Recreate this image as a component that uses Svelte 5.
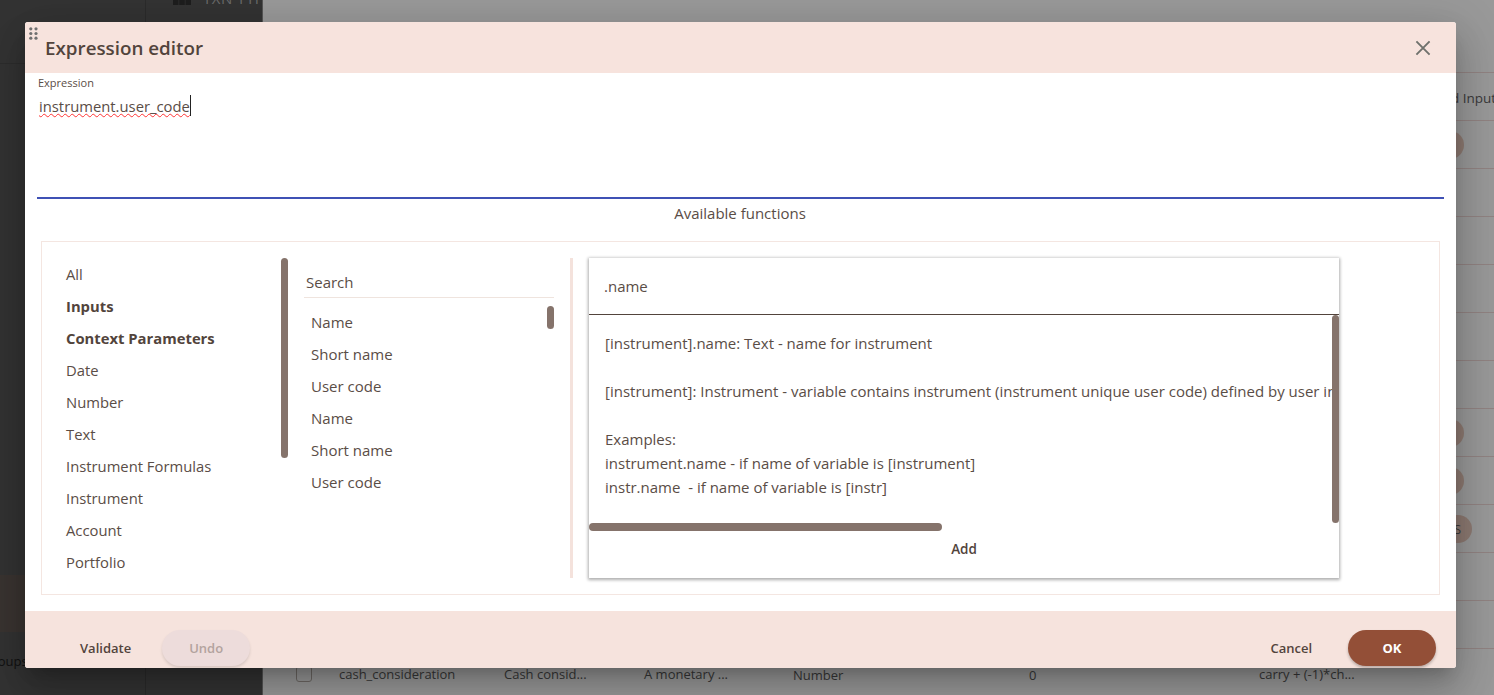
<script lang="ts">
  const categories = [
    { name: 'All' },
    { name: 'Inputs', bold: true },
    { name: 'Context Parameters', bold: true },
    { name: 'Date' },
    { name: 'Number' },
    { name: 'Text' },
    { name: 'Instrument Formulas' },
    { name: 'Instrument' },
    { name: 'Account' },
    { name: 'Portfolio' }
  ]
  const functions = ['Name', 'Short name', 'User code', 'Name', 'Short name', 'User code']
  const pills = [
    { top: 131, left: 1157, width: 44, text: '' },
    { top: 419, left: 1157, width: 44, text: '' },
    { top: 467, left: 1157, width: 44, text: '' },
    { top: 515, left: 1165, width: 44, text: 'S' }
  ]
  const rowLines = [72, 120, 168, 216, 264, 312, 360, 408, 456, 504, 552, 600, 648]
</script>

<div class="page">
  <aside class="sidebar">
    <div class="side-top">
      <svg class="grid-icon" width="18" height="5" viewBox="0 0 18 5"><rect width="5.5" height="5" /><rect x="6.25" width="5.5" height="5" /><rect x="12.5" width="5.5" height="5" /></svg>
      <span>TXN TYPE</span>
    </div>
    <div class="side-line"></div>
    <div class="side-band"></div>
    <span class="side-groups">Groups</span>
  </aside>

  <main class="backdrop">
    {#each rowLines as y}
      <div class="row-line" style="top: {y}px"></div>
    {/each}
    {#each pills as p}
      <div class="pill" style="top: {p.top}px; left: {p.left}px; width: {p.width}px">{p.text}</div>
    {/each}
    <span class="bg-text head-tail">d Input</span>
    <div class="bg-row">
      <span class="bg-check"></span>
      <span class="c1">cash_consideration</span>
      <span class="c2">Cash consid...</span>
      <span class="c3">A monetary ...</span>
      <span class="c4">Number</span>
      <span class="c5">0</span>
      <span class="c6">carry + (-1)*ch...</span>
    </div>
  </main>

  <div class="dialog">
    <header class="head">
      <svg class="drag" width="9" height="13" viewBox="0 0 9 13" fill="#6f6f6f">
        <circle cx="1.8" cy="1.8" r="1.6" /><circle cx="7" cy="1.8" r="1.6" />
        <circle cx="1.8" cy="6.5" r="1.6" /><circle cx="7" cy="6.5" r="1.6" />
        <circle cx="1.8" cy="11.2" r="1.6" /><circle cx="7" cy="11.2" r="1.6" />
      </svg>
      <h1>Expression editor</h1>
      <button class="close" type="button" aria-label="Close">
        <svg width="16" height="16" viewBox="0 0 16 16" fill="none" stroke="#6f716c" stroke-width="1.9"><path d="M1.4 1.4 14.6 14.6M14.6 1.4 1.4 14.6" /></svg>
      </button>
    </header>

    <section class="body">
      <div class="expr">
        <label for="expr-box">Expression</label>
        <div id="expr-box" class="expr-value"><span class="squiggle">instrument.user_code</span><span class="caret"></span></div>
      </div>
      <div class="avail">Available functions</div>

      <div class="panel">
        <div class="cats">
          <ul>
            {#each categories as c}
              <li class:bold={c.bold}>{c.name}</li>
            {/each}
          </ul>
          <div class="thumb v cats-thumb"></div>
        </div>

        <div class="funcs">
          <div class="search">Search</div>
          <ul>
            {#each functions as f}
              <li>{f}</li>
            {/each}
          </ul>
          <div class="thumb v funcs-thumb"></div>
        </div>

        <div class="divider"></div>

        <div class="card">
          <div class="card-title">.name</div>
          <div class="card-body">
            <p>[instrument].name: Text - name for instrument</p>
            <p>[instrument]: Instrument - variable contains instrument (instrument unique user code) defined by user in the input form of the report</p>
            <p>Examples:<br />instrument.name - if name of variable is [instrument]<br />instr.name&nbsp; - if name of variable is [instr]</p>
            <div class="thumb v card-thumb-v"></div>
            <div class="thumb card-thumb-h"></div>
          </div>
          <div class="card-foot"><button type="button" class="text-btn add">Add</button></div>
        </div>
      </div>
    </section>

    <footer class="foot">
      <button type="button" class="text-btn">Validate</button>
      <button type="button" class="undo">Undo</button>
      <span class="spacer"></span>
      <button type="button" class="text-btn">Cancel</button>
      <button type="button" class="ok">OK</button>
    </footer>
  </div>
</div>

<style>
  :global(body) {
    margin: 0;
    font-family: "Open Sans", "Noto Sans", sans-serif;
    color: #5a4d46;
  }
  ul { list-style: none; margin: 0; padding: 0; }
  button { font-family: inherit; border: none; background: none; padding: 0; cursor: pointer; }

  .page {
    position: relative;
    width: 1494px;
    height: 695px;
    overflow: hidden;
    display: flex;
    background: #999;
  }
  .sidebar {
    position: relative;
    width: 263px;
    flex-shrink: 0;
    background: #333;
    border-right: 1px solid #555;
    box-sizing: border-box;
    color: #1c1c1c;
  }
  .side-top {
    display: flex;
    gap: 12px;
    padding: 0 0 0 173px;
    height: 5px;
    align-items: flex-start;
    font-size: 15px;
    line-height: 14px;
    overflow: hidden;
    color: #6a6a6a;
    white-space: nowrap;
  }
  .side-top span { margin-top: -9px; letter-spacing: .5px; }
  .grid-icon { fill: #1d1d1d; flex-shrink: 0; }
  .side-line {
    position: absolute;
    top: 63px;
    left: 0;
    right: 0;
    height: 1px;
    background: #2d2d2d;
  }
  .side-band {
    position: absolute;
    top: 575px;
    left: 0;
    right: 0;
    height: 57px;
    background: #3a3431;
  }
  .side-groups {
    position: absolute;
    top: 652px;
    left: -17px;
    font-size: 13px;
    color: #111;
  }
  .sidebar::after {
    content: "";
    position: absolute;
    top: 0;
    bottom: 0;
    left: 145px;
    width: 1px;
    background: #2b2b2b;
  }
  .backdrop { position: relative; flex: 1; }
  .row-line {
    position: absolute;
    left: 0;
    right: 0;
    height: 1px;
    background: #918382;
  }
  .pill {
    position: absolute;
    height: 28px;
    border-radius: 14px;
    background: #8d7a72;
    color: #3a3a3a;
    font-size: 13px;
    line-height: 28px;
    padding-left: 26px;
    box-sizing: border-box;
  }
  .bg-text { position: absolute; font-size: 13.5px; color: #3a3a3a; }
  .head-tail { top: 89px; left: 1188px; white-space: nowrap; }
  .bg-row {
    position: absolute;
    top: 666px;
    left: 0;
    right: 0;
    height: 16px;
    font-size: 13px;
    line-height: 16px;
    color: #383838;
    white-space: nowrap;
  }
  .bg-row span { position: absolute; top: 0; }
  .bg-row .bg-check {
    left: 33px;
    top: 0;
    width: 16px;
    height: 16px;
    border: 1.5px solid #6f6a66;
    border-radius: 3px;
    box-sizing: border-box;
  }
  .c1 { left: 76px; }
  .c2 { left: 241px; }
  .c3 { left: 381px; }
  .c4 { left: 530px; top: 1px !important; }
  .c5 { left: 766px; top: 1px !important; }
  .c6 { left: 996px; }

  .dialog {
    position: absolute;
    left: 25px;
    top: 22px;
    width: 1431px;
    height: 646px;
    display: flex;
    flex-direction: column;
    background: #fff;
    border-radius: 3px;
    overflow: hidden;
    box-shadow: 0 11px 15px -7px rgba(0,0,0,.2), 0 24px 38px 3px rgba(0,0,0,.14), 0 9px 46px 8px rgba(0,0,0,.12);
  }
  .head {
    position: relative;
    height: 51px;
    flex-shrink: 0;
    display: flex;
    align-items: center;
    padding: 0 25px 0 20px;
    background: #f7e3dd;
    box-sizing: border-box;
  }
  .drag { position: absolute; left: 4px; top: 5px; }
  h1 {
    margin: 0;
    font-size: 18.8px;
    font-weight: 600;
    line-height: 26px;
    color: #52443c;
    flex: 1;
  }
  .close { display: flex; }

  .body {
    flex: 1;
    min-height: 0;
    display: flex;
    flex-direction: column;
    padding: 0 12px 0 12px;
  }
  .expr {
    height: 126px;
    flex-shrink: 0;
    border-bottom: 2px solid #3f51b5;
    box-sizing: border-box;
    padding: 3px 0 0 1px;
  }
  .expr label { display: block; font-size: 11px; line-height: 14px; }
  .expr-value { display: flex; margin: 5px 0 0 1px; font-size: 14.8px; line-height: 22px; height: 22px; }
  .squiggle { text-decoration: underline wavy #f33 1px; text-underline-offset: 1px; }
  .caret { width: 1px; height: 21px; background: #222; }
  .avail {
    height: 29px;
    flex-shrink: 0;
    margin-top: 1px;
    font-size: 15px;
    line-height: 26px;
    text-align: center;
    margin-right: 1px;
  }
  .panel {
    margin: 12px 4px 0;
    height: 354px;
    flex-shrink: 0;
    border: 1px solid #f4e6e1;
    box-sizing: border-box;
    display: flex;
    padding-top: 16px;
    font-size: 15px;
  }
  .cats { position: relative; width: 241px; flex-shrink: 0; height: 320px; font-size: 14.8px; }
  .cats li { height: 32px; line-height: 32px; padding-left: 24px; white-space: nowrap; }
  .cats li.bold { font-weight: 700; color: #52443c; }
  .thumb { position: absolute; background: #85736b; border-radius: 4px; }
  .thumb.v { width: 7px; }
  .cats-thumb { left: 239px; top: 0; height: 200px; }
  .funcs { position: relative; width: 250px; margin-left: 21px; flex-shrink: 0; }
  .search {
    margin-top: 7px;
    height: 32px;
    line-height: 34px;
    padding-left: 2px;
    border-bottom: 1px solid #efe4de;
  }
  .funcs ul { padding-top: 8px; }
  .funcs li { height: 32px; line-height: 32px; padding-left: 7px; }
  .funcs-thumb { right: 0; top: 48px; height: 23px; }
  .divider { width: 3px; height: 320px; margin-left: 16px; background: #f4e2dc; flex-shrink: 0; }
  .card {
    width: 750px;
    height: 320px;
    margin-left: 16px;
    flex-shrink: 0;
    display: flex;
    flex-direction: column;
    background: #fff;
    box-shadow: 0 1px 3px 1px rgba(0,0,0,.32);
  }
  .card-title {
    height: 57px;
    flex-shrink: 0;
    box-sizing: border-box;
    border-bottom: 1px solid #52443c;
    padding-left: 15px;
    line-height: 56px;
  }
  .card-body {
    position: relative;
    height: 216px;
    flex-shrink: 0;
    overflow: hidden;
    padding: 16px 0 0 16px;
    box-sizing: border-box;
    white-space: nowrap;
    line-height: 24px;
  }
  .card-body p { margin: 0 0 24px; }
  .card-thumb-v { right: 0; top: 0; height: 208px; }
  .card-thumb-h { left: 0; bottom: 0; height: 8px; width: 353px; }
  .card-foot { flex: 1; display: flex; justify-content: center; align-items: flex-start; padding-top: 9px; }
  .text-btn { font-size: 13px; font-weight: 600; color: #52443c; line-height: 18px; }
  .text-btn.add { font-size: 13.5px; }

  .foot {
    height: 57px;
    flex-shrink: 0;
    display: flex;
    align-items: center;
    padding: 17px 20px 1px 55px;
    box-sizing: border-box;
    background: #f6e3dd;
  }
  .undo {
    margin-left: 31px;
    width: 88px;
    height: 36px;
    border-radius: 18px;
    background: #eddcdb;
    box-shadow: 0 2px 3px rgba(0,0,0,.12);
    font-size: 13px;
    font-weight: 600;
    color: #b3a39e;
  }
  .spacer { flex: 1; }
  .ok {
    margin-left: 36px;
    width: 88px;
    height: 36px;
    border-radius: 18px;
    background: #934f37;
    box-shadow: 0 2px 3px rgba(0,0,0,.25);
    font-size: 13px;
    font-weight: 700;
    color: #fff;
  }
</style>
